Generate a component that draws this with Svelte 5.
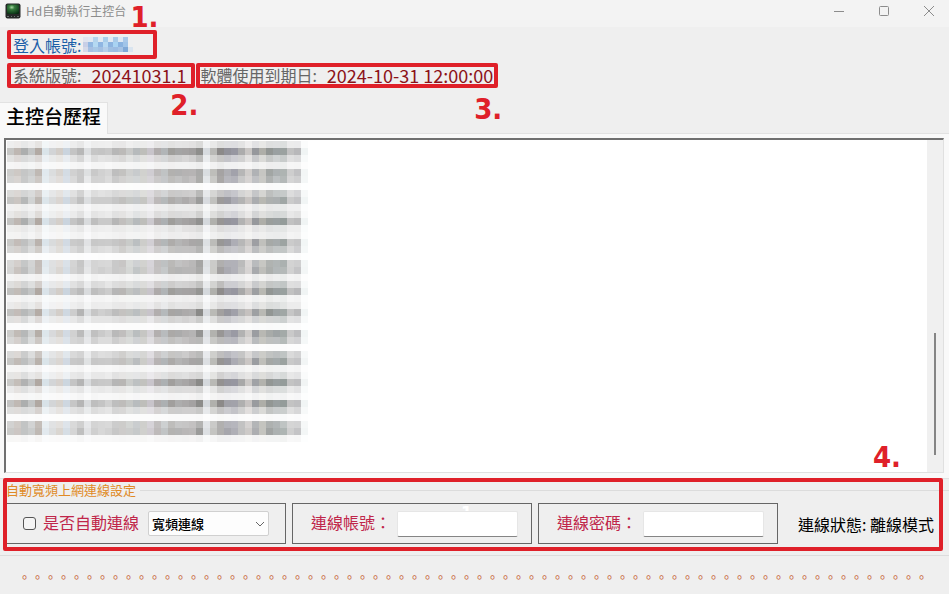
<script>
    let autoConnect = $state(false);
    let mode = $state("寬頻連線");
    let account = $state("");
    let password = $state("");

    // masked account, 10 x 3 cells
    const accountCells = [
        "e0e4ee", "dfe8f2", "b4d3ec", "dfe9f2", "a9cdea", "dfe9f3", "a9cae8", "dce8f3", "a9c8e8", "eeeff0",
        "c8cfe6", "93b8e2", "b5d9f2", "8fb6e2", "b7d9f2", "8db4e0", "a9d3f2", "8ab3e0", "a0c4e8", "eeeff0",
        "d4d9e8", "a6bfe2", "a8c8e6", "a3c0e2", "b4cee9", "9fbfe2", "9cbce2", "a6c3e4", "7fa8d6", "d9e4ef"
    ];

    // masked log: one colour per column, one strength per row
    const cols = (
        "c0c0be beb7b2 acaeae c2c4c4 b0a8a2 d8e2e8 cdcfd1 d2cdc8 cad4de c4c4c4 b4b4b4 d9dbdd bebebe c4c4c4 " +
        "c8c8c8 b6b6b6 b8b6b4 c2c4c2 b6babc bebeba c8c4ca aeaaaa acb0b2 94928f a4a4a4 a4a2a2 a09e9e 8a8a88 " +
        "d4d8dc b0b0ac 8c8a89 92929a 9696a0 a8a8a8 c4c0be 96989c aeaea8 929694 989e9f 949c9a bababa b8b8ba f0f4f4"
    ).split(" ");
    const rows = [
        0.3, 1, 0.5, 0.15, 0.8, 0.68, 0.04, 0.55, 0.85, 0.24, 0.38, 1, 0.28, 0.18, 0.85, 0.62, 0.04, 0.72,
        0.75, 0.18, 0.52, 1, 0.17, 0.3, 0.92, 0.45, 0.05, 0.88, 0.65, 0.03, 0.6, 0.87, 0.14, 0.37, 0.98,
        0.36, 0.12, 0.98, 0.52, 0.05, 0.68, 0.78, 0.12
    ];

    function shade(hex, strength, x, y) {
        const noise = ((x * 37 + y * 53 + x * y * 11) % 17) / 17 - 0.5;
        const s = Math.min(1, Math.max(0, strength * (1 + noise * 0.24)));
        const part = (i) => Math.round(255 - (255 - parseInt(hex.slice(i, i + 2), 16)) * s);
        return `rgb(${part(0)},${part(2)},${part(4)})`;
    }
</script>

<div class="window">
    <header class="titlebar">
        <svg class="logo" width="16" height="16" viewBox="0 0 16 16">
            <defs>
                <radialGradient id="screen" cx="0.4" cy="0.3" r="0.8">
                    <stop offset="0" stop-color="#a5d8a0" />
                    <stop offset="0.3" stop-color="#347a3c" />
                    <stop offset="1" stop-color="#062c12" />
                </radialGradient>
            </defs>
            <rect x="0.5" y="0.5" width="15" height="15" rx="2" fill="#262928" />
            <rect x="2" y="1.5" width="12" height="9.5" rx="1" fill="url(#screen)" />
            <path d="M2 13.5h2M6 13.5h1M9 13.5h1M12 13.5h2" stroke="#6b7472" />
        </svg>
        <span class="title">Hd自動執行主控台</span>
        <div class="winbuttons">
            <button aria-label="最小化"><svg width="12" height="12"><path d="M1 6.5h10" /></svg></button>
            <button aria-label="最大化"><svg width="12" height="12"><rect x="1.5" y="1.5" width="9" height="9" rx="1" /></svg></button>
            <button aria-label="關閉"><svg width="12" height="12"><path d="M1 1l10 10M11 1L1 11" /></svg></button>
        </div>
    </header>

    <section class="info">
        <div class="field account">
            <span>登入帳號:</span>
            <svg width="50" height="15" shape-rendering="crispEdges">
                {#each accountCells as c, i}
                    <rect x={(i % 10) * 5} y={Math.floor(i / 10) * 5} width="5" height="5" fill="#{c}" />
                {/each}
            </svg>
            <b class="mark one">1.</b>
        </div>
        <div class="row">
            <div class="field version">
                <span>系統版號:</span>
                <span class="value">20241031.1</span>
                <b class="mark two">2.</b>
            </div>
            <div class="field expire">
                <span>軟體使用到期日:</span>
                <span class="value">2024-10-31 12:00:00</span>
                <b class="mark three">3.</b>
            </div>
        </div>
    </section>

    <nav class="tabs">
        <button class="tab">主控台歷程</button>
    </nav>

    <main class="page">
        <div class="log">
            <svg width="301" height="301" shape-rendering="crispEdges">
                {#each rows as strength, y}
                    {#each cols as c, x}
                        <rect x={x * 7} y={y * 7} width="7" height="7" fill={shade(c, strength, x, y)} />
                    {/each}
                {/each}
            </svg>
            <div class="scroll"><div class="thumb"></div></div>
        </div>
    </main>

    <section class="connect">
        <fieldset>
            <legend>自動寬頻上網連線設定</legend>
            <div class="panels">
                <div class="panel auto">
                    <input id="auto" type="checkbox" bind:checked={autoConnect} />
                    <label for="auto">是否自動連線</label>
                    <div class="select">
                        <select aria-label="連線方式" bind:value={mode}>
                            <option>寬頻連線</option>
                        </select>
                        <svg width="10" height="6"><path d="M1 1l4 4l4 -4" /></svg>
                    </div>
                </div>
                <div class="panel">
                    <label for="account">連線帳號：</label>
                    <div class="box">
                        <b class="ghost">1</b>
                        <input id="account" type="text" bind:value={account} />
                    </div>
                </div>
                <div class="panel">
                    <label for="password">連線密碼：</label>
                    <div class="box">
                        <input id="password" type="password" bind:value={password} />
                    </div>
                </div>
                <span class="status">連線狀態: 離線模式</span>
            </div>
        </fieldset>
        <div class="outline"></div>
        <b class="mark four">4.</b>
    </section>

    <footer>{"。".repeat(70)}</footer>
</div>

<style>
    :global(body) {
        margin: 0;
        background: #efefef;
    }

    .window {
        display: flex;
        flex-direction: column;
        min-height: 100vh;
        background: #efefef;
        font-family: "Noto Sans CJK TC", sans-serif;
        font-size: 16px;
        line-height: 20px;
        color: #000;
    }

    .window * {
        box-sizing: border-box;
    }

    button, input, select {
        font-family: inherit;
        margin: 0;
    }

    .titlebar {
        display: flex;
        align-items: center;
        height: 27px;
        padding: 0 0 6px 5px;
        background: #f3f3f3;
    }

    .title {
        margin-left: 5px;
        font-size: 12px;
        color: #8c8c8c;
    }

    .winbuttons {
        display: flex;
        margin-left: auto;
    }

    .winbuttons button {
        display: flex;
        align-items: center;
        justify-content: center;
        width: 45px;
        height: 20px;
        padding: 0 0 0 5px;
        border: 0;
        background: none;
    }

    .winbuttons svg {
        fill: none;
        stroke: #8c8c8c;
    }

    .info {
        display: flex;
        flex-direction: column;
        align-items: flex-start;
        gap: 4px;
        padding: 3px 7px 0;
    }

    .row {
        display: flex;
        gap: 1px;
    }

    .field {
        position: relative;
        display: flex;
        align-items: center;
        height: 25px;
        border: 4px solid #df2029;
        border-radius: 2px;
        color: #666;
        white-space: nowrap;
    }

    .account {
        height: 29px;
        gap: 2px;
        padding: 0 20px 0 2px;
        color: #1c60a8;
    }

    .version {
        gap: 10px;
        padding: 0 5px 2px 2px;
    }

    .expire {
        gap: 10px;
        padding: 0 1px 2px 0;
    }

    .value {
        font-size: 18px;
        color: #8c1218;
    }

    .mark {
        position: absolute;
        font-family: "DejaVu Sans Condensed", "DejaVu Sans", sans-serif;
        font-size: 29px;
        line-height: 34px;
        color: #df2029;
    }

    .one {
        top: -34px;
        right: -5px;
    }

    .two {
        top: 21px;
        right: -7px;
    }

    .three {
        top: 25px;
        right: -8px;
    }

    .four {
        top: -39px;
        right: 48px;
    }

    .tabs {
        display: flex;
        margin-top: 14px;
        border-bottom: 1px solid #e2e2e2;
    }

    .tab {
        height: 32px;
        margin-bottom: -1px;
        padding: 0 6px 5px;
        border: 1px solid #e2e2e2;
        border-width: 1px 1px 0 0;
        background: #f9f9f9;
        font-size: 19px;
        font-weight: 500;
        line-height: 24px;
        color: #000;
    }

    .page {
        display: flex;
        flex: 1;
        padding: 4px 5px 5px 4px;
        border-bottom: 1px solid #e2e2e2;
        background: #f9f9f9;
    }

    .log {
        display: flex;
        flex: 1;
        justify-content: space-between;
        border: 1px solid #e0e0e0;
        border-top: 2px solid #707070;
        border-left: 2px solid #707070;
        background: #fff;
    }

    .log > svg {
        margin: 1px;
    }

    .scroll {
        position: relative;
        width: 16px;
        background: #f0f0f0;
    }

    .thumb {
        position: absolute;
        top: 58%;
        right: 7px;
        width: 2px;
        height: 37%;
        background: #858585;
    }

    .connect {
        position: relative;
        padding: 1px 0 11px 5px;
        border-bottom: 1px solid #dcdcdc;
    }

    fieldset {
        min-width: 0;
        margin: 0;
        padding: 3px 0 0;
        border: 0;
        border-top: 1px solid #dcdcdc;
    }

    legend {
        padding: 0 4px 0 1px;
        font-size: 13px;
        color: #e08a26;
    }

    .panels {
        display: flex;
        align-items: center;
        gap: 6px;
    }

    .panel {
        display: flex;
        align-items: center;
        gap: 6px;
        height: 41px;
        padding: 0 13px 0 18px;
        border: 1px solid #666;
        color: #c0264a;
        white-space: nowrap;
    }

    .panel label {
        padding-bottom: 4px;
    }

    .auto {
        padding: 0 16px 0 17px;
    }

    .auto label {
        margin-left: 1px;
    }

    .auto .select {
        margin-left: 3px;
    }

    input[type="checkbox"] {
        appearance: none;
        width: 13px;
        height: 13px;
        border: 1px solid #555;
        border-radius: 3px;
        background: #f5f5f5;
    }

    input[type="checkbox"]:checked {
        background: #1c60a8;
    }

    .select, .box {
        position: relative;
        display: flex;
        width: 121px;
    }

    select {
        appearance: none;
        width: 100%;
        height: 25px;
        padding: 0 20px 0 3px;
        border: 1px solid #d0d0d0;
        border-radius: 2px;
        background: #fdfdfd;
        font-size: 13px;
        font-weight: 500;
        color: #000;
    }

    .select svg {
        position: absolute;
        top: 10px;
        right: 4px;
        fill: none;
        stroke: #666;
        pointer-events: none;
    }

    .box input {
        position: relative;
        width: 100%;
        height: 26px;
        padding: 0 4px;
        border: 1px solid #e6e6e6;
        border-bottom-color: #858585;
        border-radius: 2px;
        background: #fff;
        font-size: 13px;
    }

    .ghost {
        position: absolute;
        top: -8px;
        left: 64px;
        font-family: "DejaVu Sans", sans-serif;
        color: #fff;
    }

    .status {
        margin-left: 14px;
        white-space: nowrap;
    }

    .outline {
        position: absolute;
        inset: -1px 6px 4px 3px;
        border: 4px solid #df2029;
        border-radius: 2px;
        pointer-events: none;
    }

    footer {
        height: 38px;
        padding: 11px 18px;
        overflow: hidden;
        font-size: 13px;
        white-space: nowrap;
        color: #c8653c;
    }
</style>
